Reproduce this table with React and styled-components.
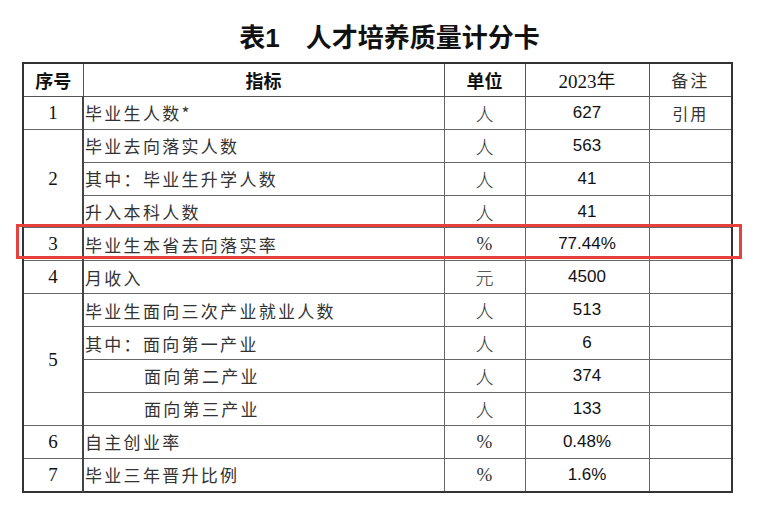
import styled, { createGlobalStyle } from "styled-components";

const GlobalStyle = createGlobalStyle`
  html, body {
    margin: 0;
    background: #fff;
  }
  body {
    font-family: "Liberation Serif", "Noto Sans CJK SC", serif;
    color: #111;
  }
`;

const rows = [
  { no: "1", span: 1, name: "毕业生人数*", unit: "人", value: "627", note: "引用" },
  { no: "2", span: 3, name: "毕业去向落实人数", unit: "人", value: "563" },
  { name: "其中：毕业生升学人数", unit: "人", value: "41" },
  { name: "升入本科人数", unit: "人", value: "41" },
  { no: "3", span: 1, name: "毕业生本省去向落实率", unit: "%", value: "77.44%" },
  { no: "4", span: 1, name: "月收入", unit: "元", value: "4500" },
  { no: "5", span: 4, name: "毕业生面向三次产业就业人数", unit: "人", value: "513" },
  { name: "其中：面向第一产业", unit: "人", value: "6" },
  { name: "面向第二产业", unit: "人", value: "374", indent: true },
  { name: "面向第三产业", unit: "人", value: "133", indent: true },
  { no: "6", span: 1, name: "自主创业率", unit: "%", value: "0.48%" },
  { no: "7", span: 1, name: "毕业三年晋升比例", unit: "%", value: "1.6%" },
];

const Page = styled.div`
  width: 759px;
  height: 531px;
  padding: 20px 0 0 22px;
  box-sizing: border-box;
`;

const Title = styled.h1`
  margin: 0 0 6px;
  width: 735px;
  text-align: center;
  font-family: "Liberation Sans", "Noto Sans CJK SC", sans-serif;
  font-weight: 700;
  font-size: 26px;
  line-height: 36px;
  color: #111;
  white-space: pre;
`;

const TableWrap = styled.div`
  position: relative;
  width: 709px;
`;

const Table = styled.table`
  border-collapse: collapse;
  table-layout: fixed;
  width: 709px;
  border: 2px solid #333;
`;

const Th = styled.th`
  height: 31.9px;
  padding: 0;
  border: 1px solid #555;
  text-align: center;
  font-family: "Noto Sans CJK SC", sans-serif;
  font-weight: 700;
  font-size: 18px;
  color: #111;
`;

const YearTh = styled(Th)`
  font-family: "Liberation Serif", "Noto Sans CJK SC", serif;
  font-weight: 400;
  font-size: 19px;
`;

const NoteTh = styled(Th)`
  font-weight: 400;
  font-size: 17px;
  letter-spacing: 2px;
  color: #333;
`;

const Td = styled.td`
  height: 31.9px;
  padding: 0;
  border: 1px solid #666;
  text-align: center;
  vertical-align: middle;
`;

const NoCell = styled(Td)`
  border-right: 2px solid #444;
  font-family: "Liberation Serif", serif;
  font-size: 19px;
`;

const NameCell = styled(Td)`
  text-align: left;
  padding-left: ${(p) => (p.$indent ? "60px" : "1px")};
  font-family: "Noto Sans CJK SC", sans-serif;
  font-weight: 400;
  font-size: 17px;
  letter-spacing: 2.3px;
  color: #333;
`;

const UnitCell = styled(Td)`
  font-family: ${(p) =>
    p.$cjk ? '"Noto Sans CJK SC", sans-serif' : '"Liberation Serif", serif'};
  font-size: ${(p) => (p.$cjk ? "18px" : "19px")};
  font-weight: 300;
  color: #333;
`;

const ValueCell = styled(Td)`
  font-family: "Liberation Sans", sans-serif;
  font-size: 17px;
  color: #111;
`;

const NoteCell = styled(Td)`
  font-family: "Noto Sans CJK SC", sans-serif;
  font-size: 16px;
  letter-spacing: 2px;
  color: #333;
`;

const Highlight = styled.div`
  position: absolute;
  left: -6px;
  top: 162px;
  width: 726px;
  height: 35px;
  border: 3px solid #e8413d;
  box-sizing: border-box;
  pointer-events: none;
`;

const App = () => {
  return (
    <Page>
      <GlobalStyle />
      <Title>{"表1　人才培养质量计分卡"}</Title>
      <TableWrap>
        <Table>
          <colgroup>
            <col style={{ width: 60 }} />
            <col style={{ width: 361 }} />
            <col style={{ width: 81 }} />
            <col style={{ width: 124 }} />
            <col style={{ width: 83 }} />
          </colgroup>
          <thead>
            <tr>
              <Th>序号</Th>
              <Th>指标</Th>
              <Th>单位</Th>
              <YearTh>2023年</YearTh>
              <NoteTh>备注</NoteTh>
            </tr>
          </thead>
          <tbody>
            {rows.map((r, i) => (
              <tr key={i}>
                {r.no && <NoCell rowSpan={r.span}>{r.no}</NoCell>}
                <NameCell $indent={r.indent}>{r.name}</NameCell>
                <UnitCell $cjk={r.unit !== "%"}>{r.unit}</UnitCell>
                <ValueCell>{r.value}</ValueCell>
                <NoteCell>{r.note || ""}</NoteCell>
              </tr>
            ))}
          </tbody>
        </Table>
        <Highlight />
      </TableWrap>
    </Page>
  );
};

export default App;
